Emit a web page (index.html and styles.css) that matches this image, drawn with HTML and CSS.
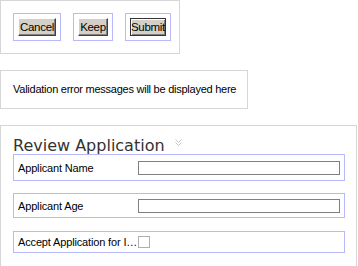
FILE: index.html
```html
<!DOCTYPE html>
<html lang="en">
<head>
  <meta charset="UTF-8">
  <title>Review Application</title>
  <link rel="stylesheet" href="styles.css">
</head>
<body>

  <!-- Action buttons -->
  <div class="toolbar">
    <div class="btn-wrap"><button class="btn btn-cancel">Cancel</button></div>
    <div class="btn-wrap"><button class="btn btn-keep">Keep</button></div>
    <div class="btn-wrap"><button class="btn btn-submit">Submit</button></div>
  </div>

  <!-- Validation messages -->
  <div class="errors">Validation error messages will be displayed here</div>

  <!-- Review form -->
  <div class="review">
    <div class="review-title">
      Review Application
      <svg class="collapse" width="7" height="8" viewBox="0 0 7 8">
        <path d="M0.5 0.5l3 3l3-3M0.5 3.5l3 3l3-3" fill="none" stroke="#c4c4c4" stroke-width="1"/>
      </svg>
    </div>

    <div class="field field-name">
      <label class="field-label">Applicant Name</label>
      <input type="text" class="field-input">
    </div>

    <div class="field field-age">
      <label class="field-label">Applicant Age</label>
      <input type="text" class="field-input">
    </div>

    <div class="field field-accept">
      <label class="field-label" title="Accept Application for Interview">Accept Application for Interview</label>
      <input type="checkbox" class="field-check">
    </div>
  </div>

</body>
</html>
```

FILE: styles.css
```css
body {
  margin: 0;
  font-family: "Liberation Sans", Arial, sans-serif;
  font-size: 11px;
  color: #000;
  background: #fff;
}

.toolbar {
  display: flex;
  gap: 12px;
  width: 180px;
  box-sizing: border-box;
  padding: 12px;
  border: 1px solid #d6d6d6;
}

.btn-wrap {
  display: flex;
  padding: 4px;
  border: 1px solid #b8b8fa;
}

.btn {
  height: 18px;
  padding: 0;
  font-family: "Liberation Sans", Arial, sans-serif;
  font-size: 11.5px;
  letter-spacing: -0.3px;
  white-space: nowrap;
  color: #000;
  background: #d4d0c8;
  border: 1px solid;
  border-color: #fff #404040 #404040 #fff;
  box-shadow: inset -1px -1px #808080;
}

.btn-cancel {
  width: 38px;
}

.btn-keep {
  width: 30px;
}

.btn-submit {
  width: 36px;
  border-color: #333;
  box-shadow: inset 1px 1px #fff, inset -1px -1px #808080;
}

.errors {
  width: 248px;
  height: 39px;
  box-sizing: border-box;
  margin-top: 16px;
  padding: 0 12px;
  line-height: 37px;
  white-space: nowrap;
  letter-spacing: -0.25px;
  border: 1px solid #d6d6d6;
}

.review {
  width: 357px;
  box-sizing: border-box;
  margin-top: 16px;
  padding: 12px 0 14px 12px;
  border: 1px solid #d6d6d6;
}

.review-title {
  font-family: "DejaVu Sans", Verdana, sans-serif;
  font-size: 16px;
  line-height: 16px;
  color: #333;
}

.collapse {
  vertical-align: top;
  margin-left: 5px;
  margin-top: 1px;
}

.field {
  display: flex;
  align-items: center;
  width: 332px;
  box-sizing: border-box;
  padding-left: 4px;
  border: 1px solid #b8b8fa;
}

.field-name {
  height: 27px;
}

.field-age {
  height: 25px;
  margin-top: 12px;
}

.field-accept {
  height: 22px;
  margin-top: 13px;
}

.field-label {
  width: 120px;
  flex-shrink: 0;
  white-space: nowrap;
  overflow: hidden;
  text-overflow: ellipsis;
  letter-spacing: -0.15px;
}

.field-input {
  width: 202px;
  height: 14px;
  box-sizing: border-box;
  margin: 0;
  padding: 0 2px;
  border: 1px solid #808080;
  background: #fff;
}

.field-check {
  appearance: none;
  width: 12px;
  height: 12px;
  margin: 0;
  border: 1px solid #b0b0b0;
  background: #fff;
}
```
